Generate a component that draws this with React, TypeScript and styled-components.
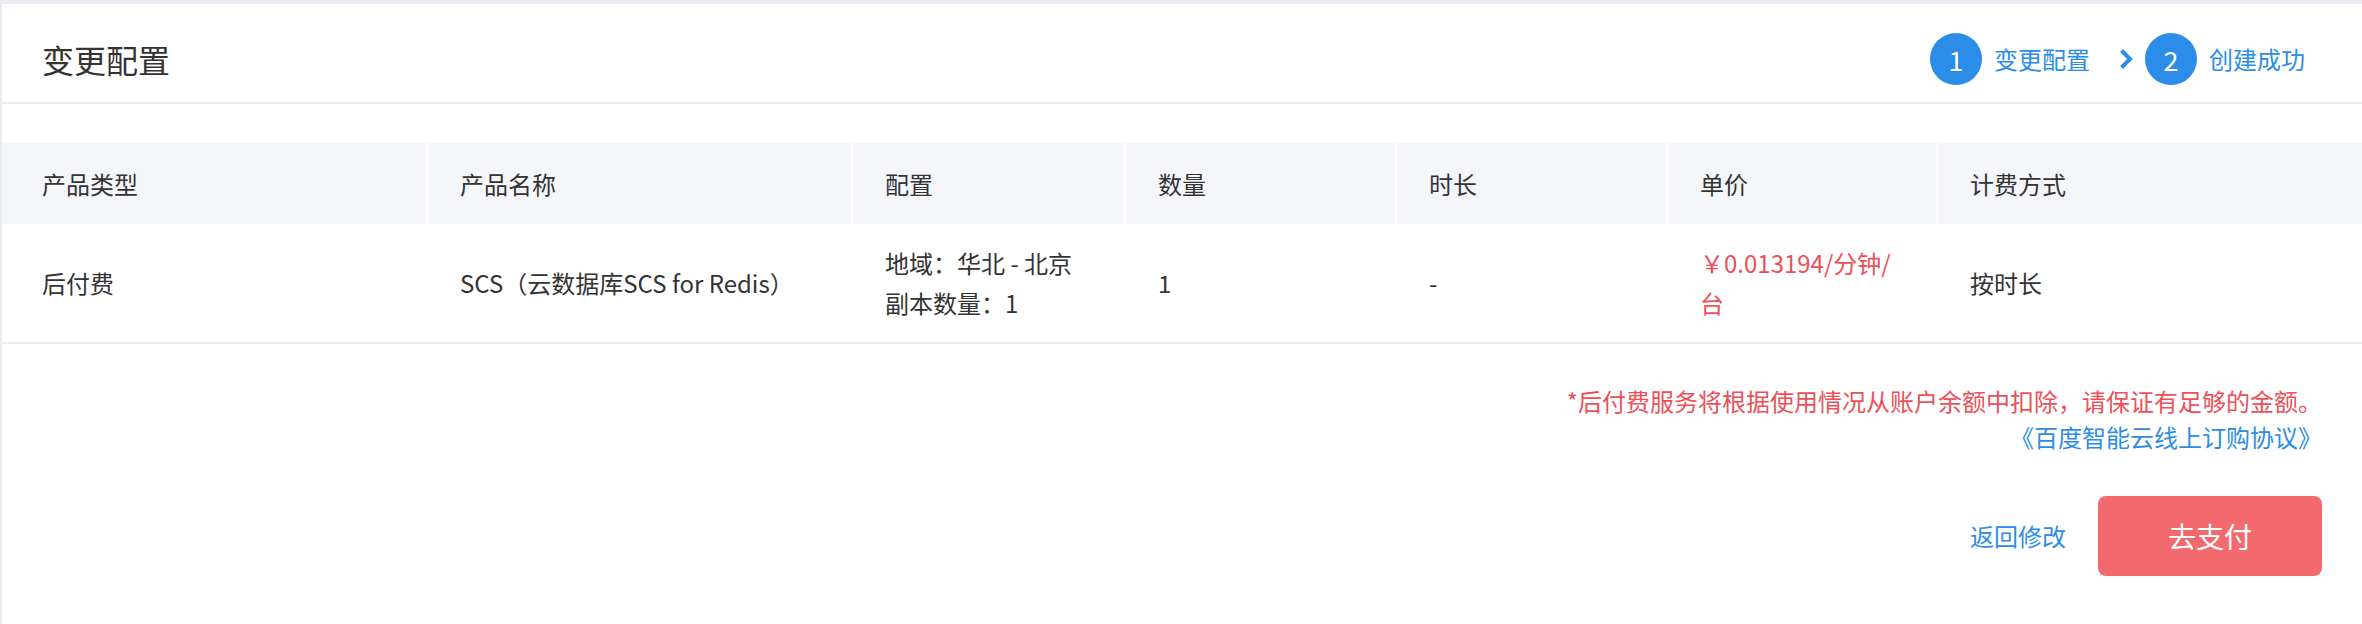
import React from "react";
import styled, { createGlobalStyle } from "styled-components";

const GlobalStyle = createGlobalStyle`
  html, body {
    margin: 0;
    padding: 0;
    background: #e9ebf0;
  }
  * { box-sizing: border-box; }
`;

const FONT = `"Noto Sans CJK SC", "Noto Sans", sans-serif`;
const BLUE = "#2b8de8";
const RED = "#ee4f57";

const Page = styled.div`
  margin: 4px 0 0 2px;
  min-height: 620px;
  background: #fff;
  font-family: ${FONT};
  color: #333;
`;

const Header = styled.header`
  display: flex;
  align-items: center;
  justify-content: space-between;
  height: 100px;
  padding: 12px 57px 0 40px;
  border-bottom: 2px solid #e8eaef;
`;

const Title = styled.h1`
  margin: 0;
  font-size: 32px;
  font-weight: 400;
  line-height: 1;
  color: #333;
`;

const Steps = styled.ol`
  display: flex;
  align-items: center;
  margin: 0;
  padding: 0;
  list-style: none;
`;

const Step = styled.li`
  display: flex;
  align-items: center;
`;

const StepCircle = styled.span`
  display: flex;
  align-items: center;
  justify-content: center;
  width: 52px;
  height: 52px;
  border-radius: 50%;
  background: ${BLUE};
  color: #fff;
  font-size: 27px;
  line-height: 1;
`;

const StepLabel = styled.span`
  margin-left: 12px;
  font-size: 24px;
  line-height: 1;
  color: ${BLUE};
`;

const Chevron = styled.svg`
  display: block;
  margin: 0 12px 0 29px;
`;

const Table = styled.div`
  margin-top: 39px;
`;

const Row = styled.div<{ $head?: boolean }>`
  display: grid;
  grid-template-columns: 424px 423px 271px 269px 269px 268px 1fr;
  column-gap: 2px;
  min-height: ${(p) => (p.$head ? "81px" : "120px")};
  border-bottom: ${(p) => (p.$head ? "none" : "2px solid #e9edf5")};
`;

const Cell = styled.div<{ $head?: boolean; $red?: boolean }>`
  display: flex;
  flex-direction: column;
  justify-content: center;
  padding: 0 32px;
  font-size: 24px;
  line-height: 40px;
  background: ${(p) => (p.$head ? "#f5f6fa" : "transparent")};
  color: ${(p) => (p.$red ? RED : "#333")};
  &:first-child {
    padding-left: 40px;
  }
`;

const Notes = styled.div`
  padding: 39px 40px 0;
  text-align: right;
  font-size: 24px;
  line-height: 36px;
`;

const Warning = styled.p`
  margin: 0;
  color: ${RED};
`;

const Agreement = styled.a`
  display: block;
  color: ${BLUE};
  text-decoration: none;
`;

const Actions = styled.div`
  display: flex;
  justify-content: flex-end;
  align-items: center;
  padding: 41px 40px 0;
`;

const BackLink = styled.a`
  margin-right: 32px;
  font-size: 24px;
  line-height: 1;
  color: ${BLUE};
  text-decoration: none;
`;

const PayButton = styled.button`
  width: 224px;
  height: 80px;
  border: none;
  border-radius: 8px;
  background: #f26a6e;
  color: #fff;
  font-family: ${FONT};
  font-size: 28px;
  cursor: pointer;
`;

const headers = ["产品类型", "产品名称", "配置", "数量", "时长", "单价", "计费方式"];

export default function App() {
  return (
    <>
      <GlobalStyle />
      <Page>
        <Header>
          <Title>变更配置</Title>
          <Steps>
            <Step>
              <StepCircle>1</StepCircle>
              <StepLabel>变更配置</StepLabel>
            </Step>
            <Chevron width="14" height="22" viewBox="0 0 14 22" aria-hidden>
              <polyline
                points="2.5,2.5 11,11 2.5,19.5"
                fill="none"
                stroke={BLUE}
                strokeWidth="4"
                strokeLinecap="butt"
                strokeLinejoin="miter"
              />
            </Chevron>
            <Step>
              <StepCircle>2</StepCircle>
              <StepLabel>创建成功</StepLabel>
            </Step>
          </Steps>
        </Header>

        <Table>
          <Row $head>
            {headers.map((h) => (
              <Cell $head key={h}>
                {h}
              </Cell>
            ))}
          </Row>
          <Row>
            <Cell>后付费</Cell>
            <Cell>SCS（云数据库SCS for Redis）</Cell>
            <Cell>
              <div>地域：华北 - 北京</div>
              <div>副本数量：1</div>
            </Cell>
            <Cell>1</Cell>
            <Cell>-</Cell>
            <Cell $red>￥0.013194/分钟/台</Cell>
            <Cell>按时长</Cell>
          </Row>
        </Table>

        <Notes>
          <Warning>*后付费服务将根据使用情况从账户余额中扣除，请保证有足够的金额。</Warning>
          <Agreement href="#">《百度智能云线上订购协议》</Agreement>
        </Notes>

        <Actions>
          <BackLink href="#">返回修改</BackLink>
          <PayButton>去支付</PayButton>
        </Actions>
      </Page>
    </>
  );
}
